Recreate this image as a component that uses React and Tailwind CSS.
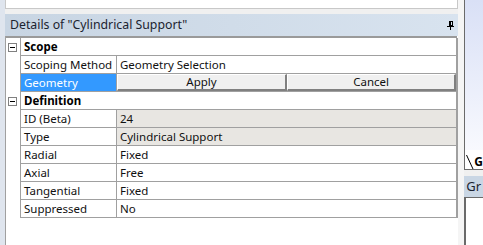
import React from 'react';

const props = [
  { name: 'ID (Beta)', value: '24', shaded: true },
  { name: 'Type', value: 'Cylindrical Support', shaded: true },
  { name: 'Radial', value: 'Fixed' },
  { name: 'Axial', value: 'Free' },
  { name: 'Tangential', value: 'Fixed' },
  { name: 'Suppressed', value: 'No' },
];

const Minus = () => (
  <div className="w-[9px] h-[9px] border border-[#808080] bg-white flex items-center justify-center">
    <div className="w-[5px] h-px bg-black" />
  </div>
);

const Category = ({ label }) => (
  <div className="flex h-[18px]">
    <div className="w-[14px] flex items-center justify-center">
      <Minus />
    </div>
    <div className="flex-1 flex items-center border-l border-b border-r-2 border-[#a0a0a0] pl-[3px] font-bold text-black">
      {label}
    </div>
  </div>
);

const Row = ({ name, value, shaded, children, selected }) => (
  <div className="flex h-[18px]">
    <div className="w-[14px]" />
    <div className="flex-1 flex border-l border-b border-r-2 border-[#a0a0a0]">
      <div
        className={
          'w-[96px] border-r border-[#a0a0a0] flex items-center pl-[3px] whitespace-nowrap overflow-hidden ' +
          (selected ? 'bg-[#3399ff] text-white' : 'text-[#111]')
        }
      >
        {name}
      </div>
      {children ? (
        children
      ) : (
        <div className={'flex-1 flex items-center pl-[3px] text-[#111] whitespace-nowrap ' + (shaded ? 'bg-[#e8e6e2]' : 'bg-white')}>
          {value}
        </div>
      )}
    </div>
  </div>
);

const Btn = ({ label, className }) => (
  <div
    className={
      'flex items-center justify-center bg-[#f0f0f0] border border-t-white border-l-white border-b-2 border-r-2 border-b-[#808080] border-r-[#808080] text-[#111] ' +
      className
    }
  >
    {label}
  </div>
);

const Pin = () => (
  <svg width="7" height="9" viewBox="0 0 7 9" className="mr-[4px]">
    <rect x="2.5" y="0.5" width="3" height="4" fill="none" stroke="#000" strokeWidth="1" />
    <rect x="2" y="0" width="2" height="5" fill="#000" />
    <rect x="0" y="5" width="7" height="1" fill="#000" />
    <rect x="3" y="6" width="1" height="3" fill="#000" />
  </svg>
);

export default function App() {
  return (
    <div
      className="w-[483px] h-[245px] flex bg-white overflow-hidden text-[11.5px] leading-none"
      style={{ fontFamily: '"Noto Sans", "Open Sans", sans-serif' }}
    >
      <div className="w-[5px] bg-[#dfe5ee]" />

      <div className="w-[455px] flex flex-col">
        <div className="h-[9px] bg-white border-l border-r border-b border-[#c8c8c8]" />
        <div className="h-[5px] bg-[#f0f0f0]" />
        <div className="h-[22px] flex items-center justify-between pl-[5px] bg-gradient-to-r from-[#c8d5e3] to-[#d8e3ef] text-[12.3px] text-[#1b2330]">
          <span>Details of "Cylindrical Support"</span>
          <Pin />
        </div>
        <div className="flex-1 flex flex-col bg-white border-l border-[#a0a0a0]">
          <div className="h-[2px] bg-[#9a9a9a] mr-[1px]" />
          <Category label="Scope" />
          <Row name="Scoping Method" value="Geometry Selection" />
          <Row name="Geometry" selected>
            <div className="flex-1 flex">
              <Btn label="Apply" className="w-[170px]" />
              <Btn label="Cancel" className="flex-1" />
            </div>
          </Row>
          <Category label="Definition" />
          {props.map((p) => (
            <Row key={p.name} name={p.name} value={p.value} shaded={p.shaded} />
          ))}
        </div>
      </div>

      <div className="w-[6px] bg-[#f5f5f5]" />

      <div className="flex-1 flex flex-col">
        <div className="h-[150px] border-l border-[#6a6a6a] bg-gradient-to-b from-[#d9e0f6] to-[#f8f9fe]" />
        <div className="h-[20px] border-l border-b border-[#6a6a6a] bg-white flex items-end">
          <svg width="8" height="14" viewBox="0 0 8 14" className="ml-[1px]">
            <line x1="0.5" y1="0" x2="7" y2="14" stroke="#000" strokeWidth="1" />
          </svg>
          <span className="font-bold text-[12px] text-black mb-[1px]">G</span>
        </div>
        <div className="h-[6px] bg-[#f0f0f0]" />
        <div className="h-[21px] bg-[#c9d6e4] flex items-center pl-[2px] text-[13px] text-[#1b2330]">Gr</div>
        <div className="flex-1 bg-white border-l-2 border-t border-[#6a6a6a]" />
      </div>
    </div>
  );
}
